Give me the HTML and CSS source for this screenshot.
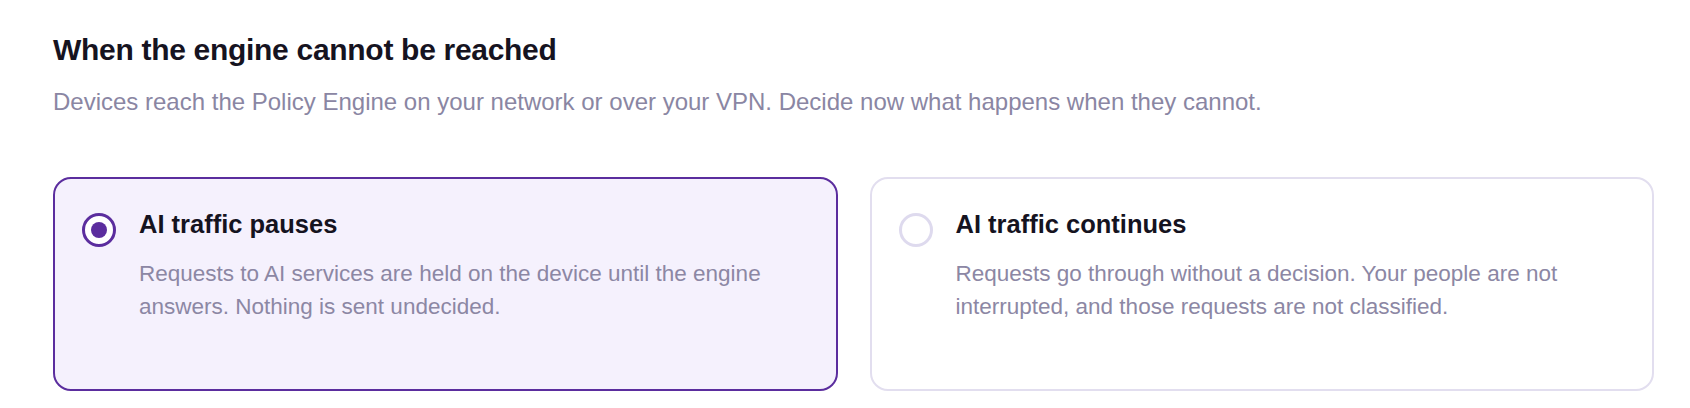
FILE: index.html
```html
<!DOCTYPE html>
<html lang="en">
<head>
<meta charset="utf-8">
<title>Engine unreachable policy</title>
<link rel="stylesheet" href="styles.css">
</head>
<body>
<section class="page">
  <h2 class="heading">When the engine cannot be reached</h2>
  <p class="subtitle">Devices reach the Policy Engine on your network or over your VPN. Decide now what happens when they cannot.</p>
  <div class="options" role="radiogroup">
    <div class="option option--selected" role="radio" aria-checked="true">
      <span class="radio radio--on"><span class="radio-dot"></span></span>
      <div class="option-body">
        <div class="option-title">AI traffic pauses</div>
        <div class="option-desc">Requests to AI services are held on the device until the engine answers. Nothing is sent undecided.</div>
      </div>
    </div>
    <div class="option" role="radio" aria-checked="false">
      <span class="radio"></span>
      <div class="option-body">
        <div class="option-title">AI traffic continues</div>
        <div class="option-desc">Requests go through without a decision. Your people are not interrupted, and those requests are not classified.</div>
      </div>
    </div>
  </div>
</section>
</body>
</html>
```

FILE: styles.css
```css
* { box-sizing: border-box; }

html, body {
  margin: 0;
  padding: 0;
  background: #ffffff;
}

body {
  font-family: "Liberation Sans", Arial, Helvetica, sans-serif;
}

.page {
  padding: 32px 36px 0 53px;
}

.heading {
  margin: 0;
  font-size: 30px;
  line-height: 36px;
  font-weight: 700;
  letter-spacing: -0.3px;
  color: #16131f;
}

.subtitle {
  margin: 16px 0 0;
  font-size: 24px;
  line-height: 36px;
  color: #8a86a3;
}

.options {
  display: grid;
  grid-template-columns: 1fr 1fr;
  gap: 32px;
  margin-top: 57px;
}

.option {
  display: flex;
  align-items: flex-start;
  gap: 23px;
  min-height: 214px;
  padding: 30px 33px 30px 27px;
  border: 2px solid #e2deef;
  border-radius: 18px;
  background: #ffffff;
}

.option--selected {
  border-color: #5b2d9e;
  background: #f5f1fd;
}

.radio {
  flex: 0 0 auto;
  width: 34px;
  height: 34px;
  margin-top: 4px;
  border-radius: 50%;
  border: 3px solid #dedaee;
  background: #ffffff;
  display: flex;
  align-items: center;
  justify-content: center;
}

.radio--on {
  border-color: #5b2d9e;
  background: #ffffff;
}

.radio-dot {
  width: 16px;
  height: 16px;
  border-radius: 50%;
  background: #5b2d9e;
}

.option-body {
  flex: 1 1 auto;
  min-width: 0;
}

.option-title {
  font-size: 25.5px;
  line-height: 30px;
  font-weight: 700;
  color: #15131f;
}

.option-desc {
  margin-top: 18px;
  font-size: 22.5px;
  line-height: 33px;
  color: #8c87a4;
}
```
